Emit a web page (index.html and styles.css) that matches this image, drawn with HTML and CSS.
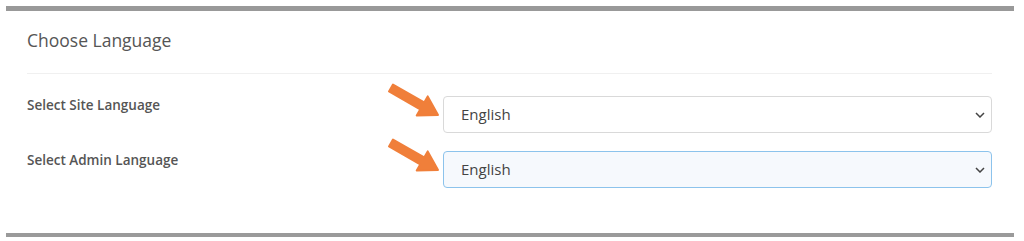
FILE: index.html
```
<!DOCTYPE html>
<html>
<head>
<meta charset="utf-8">
<link rel="stylesheet" href="styles.css">
</head>
<body>
<div class="card">
  <div class="card-header">
    <h3 class="card-title">Choose Language</h3>
  </div>
  <div class="card-body">
    <div class="form-row">
      <label class="form-label">Select Site Language</label>
      <div class="select-wrap">
        <svg class="pointer" width="56" height="40" viewBox="0 0 56 40"><polygon points="7,3.5 38.2,21.4 41.7,15.4 52,34 30.7,34.4 34.2,28.4 3,10.5" fill="#f07f3a" stroke="#f07f3a" stroke-width="2" stroke-linejoin="round"/></svg>
        <div class="select">English</div>
        <svg class="chevron" width="10" height="6" viewBox="0 0 10 6"><polyline points="1,1 5,5 9,1" fill="none" stroke="#444" stroke-width="1.5"/></svg>
      </div>
    </div>
    <div class="form-row">
      <label class="form-label">Select Admin Language</label>
      <div class="select-wrap">
        <svg class="pointer" width="56" height="40" viewBox="0 0 56 40"><polygon points="7,3.5 38.2,21.4 41.7,15.4 52,34 30.7,34.4 34.2,28.4 3,10.5" fill="#f07f3a" stroke="#f07f3a" stroke-width="2" stroke-linejoin="round"/></svg>
        <div class="select focus">English</div>
        <svg class="chevron" width="10" height="6" viewBox="0 0 10 6"><polyline points="1,1 5,5 9,1" fill="none" stroke="#444" stroke-width="1.5"/></svg>
      </div>
    </div>
  </div>
</div>
</body>
</html>
```
FILE: styles.css
```
html, body {
  margin: 0;
  padding: 0;
  background: #fff;
}
body {
  font-family: "Open Sans", "Liberation Sans", sans-serif;
  color: #555;
  padding-top: 6px;
}
.card {
  margin: 0 10px 0 6px;
  width: 1008px;
  border-top: 5px solid #999;
  border-bottom: 4px solid #9a9a9a;
  box-sizing: border-box;
  height: 231px;
}
.card-header {
  margin: 0 22px 0 21px;
  height: 62px;
  border-bottom: 1px solid #f0f0f0;
  display: flex;
  align-items: center;
}
.card-title {
  margin: 0;
  font-size: 17.5px;
  font-weight: 400;
  color: #555;
  padding-bottom: 5px;
}
.card-body {
  padding: 22px 22px 0 21px;
  display: flex;
  flex-direction: column;
  gap: 18px;
}
.form-row {
  display: grid;
  grid-template-columns: 416px 1fr;
  align-items: start;
}
.form-label {
  font-size: 13.5px;
  font-weight: 600;
  color: #555;
}
.select-wrap {
  position: relative;
}
.select {
  height: 37px;
  box-sizing: border-box;
  border: 1px solid #d9d9d9;
  border-radius: 4px;
  background: #fff;
  padding: 0 17px 1px;
  display: flex;
  align-items: center;
  font-size: 15px;
  color: #444;
}
.select.focus {
  border-color: #8cc3ec;
  background: #f6f9fd;
}
.chevron {
  position: absolute;
  right: 7px;
  top: 16px;
}
.pointer {
  position: absolute;
  left: -57px;
  top: -15px;
}
```
